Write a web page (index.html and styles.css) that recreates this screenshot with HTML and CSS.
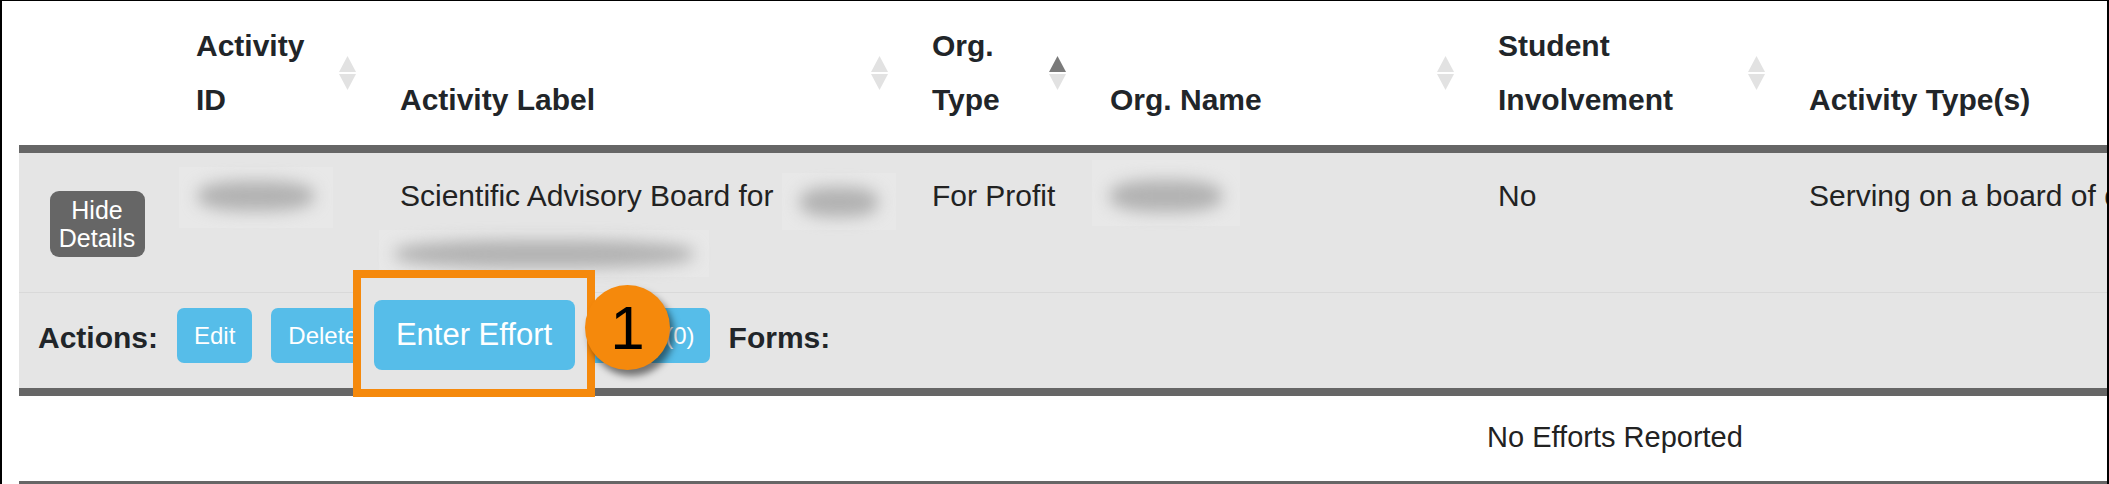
FILE: index.html
```html
<!DOCTYPE html>
<html lang="en">
<head>
<meta charset="utf-8">
<title>Activities</title>
<link rel="stylesheet" href="styles.css">
</head>
<body>
<div class="frame">
  <div class="table-clip">
    <div class="table">
      <div class="grid thead">
        <div class="th th-blank"></div>
        <div class="th"><span class="th-label">Activity<br>ID</span><svg class="sort" viewBox="0 0 17 34" width="17" height="34"><path class="up" d="M0 16 L8.5 0 L17 16Z"/><path class="dn" d="M0 18 L8.5 34 L17 18Z"/></svg></div>
        <div class="th"><span class="th-label">Activity Label</span><svg class="sort" viewBox="0 0 17 34" width="17" height="34"><path class="up" d="M0 16 L8.5 0 L17 16Z"/><path class="dn" d="M0 18 L8.5 34 L17 18Z"/></svg></div>
        <div class="th"><span class="th-label">Org.<br>Type</span><svg class="sort" viewBox="0 0 17 34" width="17" height="34"><path class="up active" d="M0 16 L8.5 0 L17 16Z"/><path class="dn" d="M0 18 L8.5 34 L17 18Z"/></svg></div>
        <div class="th"><span class="th-label">Org. Name</span><svg class="sort" viewBox="0 0 17 34" width="17" height="34"><path class="up" d="M0 16 L8.5 0 L17 16Z"/><path class="dn" d="M0 18 L8.5 34 L17 18Z"/></svg></div>
        <div class="th"><span class="th-label">Student<br>Involvement</span><svg class="sort" viewBox="0 0 17 34" width="17" height="34"><path class="up" d="M0 16 L8.5 0 L17 16Z"/><path class="dn" d="M0 18 L8.5 34 L17 18Z"/></svg></div>
        <div class="th"><span class="th-label">Activity Type(s)</span><svg class="sort" viewBox="0 0 17 34" width="17" height="34"><path class="up" d="M0 16 L8.5 0 L17 16Z"/><path class="dn" d="M0 18 L8.5 34 L17 18Z"/></svg></div>
      </div>

      <div class="grid row">
        <div class="td td-toggle"><button class="btn-toggle">Hide<br>Details</button></div>
        <div class="td"><span class="redact r-id"><span class="blob b-id"></span></span></div>
        <div class="td">
          <div class="line">Scientific Advisory Board for <span class="redact r-lab1"><span class="blob b-lab1"></span></span></div>
          <div class="line"><span class="redact r-lab2"><span class="blob b-lab2"></span></span></div>
        </div>
        <div class="td">For Profit</div>
        <div class="td"><span class="redact r-org"><span class="blob b-org"></span></span></div>
        <div class="td">No</div>
        <div class="td nowrap">Serving on a board of directors</div>
      </div>

      <div class="actions">
        <span class="label">Actions:</span>
        <button class="btn">Edit</button>
        <button class="btn">Delete</button>
        <button class="btn">Enter Effort</button>
        <button class="btn btn-count">Efforts (0)</button>
        <span class="label">Forms:</span>
      </div>

      <div class="efforts">No Efforts Reported</div>
      <div class="next-bar"></div>
    </div>
  </div>

  <div class="callout"><button class="btn btn-lg">Enter Effort</button></div>
  <div class="step">1</div>
</div>
</body>
</html>
```

FILE: styles.css
```css
* { box-sizing: border-box; }

html, body {
  margin: 0;
  padding: 0;
  background: #fff;
}

body {
  width: 2109px;
  height: 484px;
  overflow: hidden;
  font-family: "Liberation Sans", Arial, Helvetica, sans-serif;
  color: #212529;
}

.frame {
  position: relative;
  width: 2109px;
  height: 484px;
  border-left: 2px solid #000;
  border-right: 2px solid #000;
  border-top: 1px solid #000;
  padding-left: 17px;
  overflow: hidden;
}

.table-clip {
  width: 2088px;
  overflow: hidden;
}

.table {
  width: 3192px;
}

.grid {
  display: grid;
  grid-template-columns: 155px 204px 532px 178px 388px 311px 1fr;
}

/* header */
.thead {
  border-bottom: 8px solid #666;
  background: #fff;
}

.th {
  display: flex;
  justify-content: space-between;
  padding: 18px 22px;
  font-size: 30px;
  font-weight: bold;
  line-height: 54px;
  color: #212529;
}

.th-label {
  align-self: flex-end;
}

.sort {
  align-self: center;
  flex: none;
  display: block;
}

.sort path { fill: #e2e2e2; }
.sort path.active { fill: #7a7a7a; }

/* data row */
.row {
  background: #e5e5e5;
  border-bottom: 1px solid #d9d9d9;
}

.td {
  padding: 16px 22px 15px;
  font-size: 30px;
  line-height: 54px;
  color: #222;
}

.nowrap { white-space: nowrap; }

.line {
  display: flow-root;
  height: 54px;
  white-space: nowrap;
}

.td-toggle {
  padding: 0;
  display: flex;
  align-items: center;
  justify-content: center;
}

.btn-toggle {
  width: 95px;
  height: 66px;
  margin: 2px 0 0 1px;
  padding: 5px 4px;
  border: none;
  border-radius: 9px;
  background: #666;
  color: #fff;
  font-family: "Liberation Sans", Arial, sans-serif;
  font-size: 25px;
  line-height: 28px;
  text-align: center;
}

/* redacted (blurred) values */
.redact {
  display: flex;
  align-items: center;
  justify-content: center;
  background: #e8e8e8;
}

.blob {
  display: block;
  background: #b2b2b2;
  border-radius: 40%;
  filter: blur(8px);
}

.r-id {
  width: 154px;
  height: 61px;
  margin: -2px 0 0 -17px;
}
.b-id { width: 116px; height: 30px; margin-top: -4px; }

.r-lab1 {
  display: inline-flex;
  width: 114px;
  height: 57px;
  vertical-align: top;
  margin-top: 4px;
}
.b-lab1 { width: 78px; height: 30px; }

.r-lab2 {
  width: 330px;
  height: 47px;
  margin: 7px 0 0 -21px;
}
.b-lab2 { width: 298px; height: 28px; }

.r-org {
  width: 148px;
  height: 66px;
  margin: -9px 0 0 -18px;
}
.b-org { width: 112px; height: 32px; margin-top: 6px; }

/* actions row */
.actions {
  display: flex;
  align-items: center;
  gap: 19px;
  padding: 15px 19px 25px;
  background: #e5e5e5;
  border-bottom: 8px solid #666;
}

.label {
  font-size: 30px;
  font-weight: bold;
  line-height: 36px;
  padding-top: 5px;
  color: #212529;
}

.btn {
  height: 55px;
  padding: 12px 17px;
  border: none;
  border-radius: 7px;
  background: #56bde9;
  color: #fff;
  font-family: "Liberation Sans", Arial, sans-serif;
  font-size: 24px;
  line-height: 31px;
  white-space: nowrap;
}

.btn-count {
  padding: 12px 15px 12px 22px;
}

/* no efforts */
.efforts {
  height: 85px;
  padding-top: 14px;
  text-align: center;
  font-size: 29px;
  line-height: 54px;
  color: #222;
}

.next-bar {
  height: 8px;
  background: #666;
}

/* callout overlay */
.callout {
  position: absolute;
  left: 351px;
  top: 269px;
  width: 242px;
  height: 127px;
  border: 8px solid #f5890c;
  background: #e5e5e5;
  display: flex;
  align-items: center;
  justify-content: center;
  padding-top: 3px;
}

.btn-lg {
  width: 201px;
  height: 70px;
  padding: 0;
  border-radius: 8px;
  font-size: 31px;
  line-height: 70px;
}

.step {
  position: absolute;
  left: 583px;
  top: 284px;
  width: 85px;
  height: 85px;
  border-radius: 50%;
  background: #f5890c;
  box-shadow: 4px 6px 7px rgba(0, 0, 0, 0.5);
  color: #000;
  font-family: "Liberation Sans", Arial, sans-serif;
  font-size: 62px;
  line-height: 85px;
  text-align: center;
}
```
